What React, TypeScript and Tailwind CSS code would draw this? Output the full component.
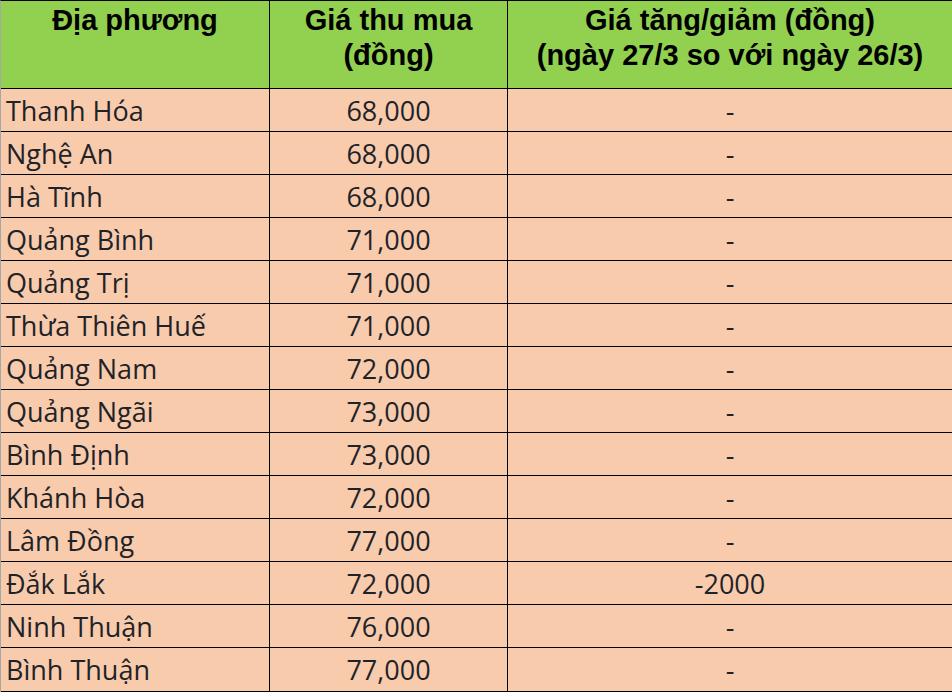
import React from "react";

const rows: [string, string, string][] = [
  ["Thanh Hóa", "68,000", "-"],
  ["Nghệ An", "68,000", "-"],
  ["Hà Tĩnh", "68,000", "-"],
  ["Quảng Bình", "71,000", "-"],
  ["Quảng Trị", "71,000", "-"],
  ["Thừa Thiên Huế", "71,000", "-"],
  ["Quảng Nam", "72,000", "-"],
  ["Quảng Ngãi", "73,000", "-"],
  ["Bình Định", "73,000", "-"],
  ["Khánh Hòa", "72,000", "-"],
  ["Lâm Đồng", "77,000", "-"],
  ["Đắk Lắk", "72,000", "-2000"],
  ["Ninh Thuận", "76,000", "-"],
  ["Bình Thuận", "77,000", "-"],
];

export default function App() {
  return (
    <div className="w-[952px] h-[696px] bg-white overflow-hidden">
      <div className="w-[952px] border-t border-t-black border-l border-l-[#a6a6a6]">
        <div className="grid grid-cols-[269px_238px_1fr] font-['Liberation_Sans',Arial,sans-serif] font-bold text-[29px] leading-[35px] text-black bg-[#92d050]">
          <div className="h-[88px] border-r border-b border-black text-center pt-[2px]">Địa phương</div>
          <div className="h-[88px] border-r border-b border-black text-center pt-[2px]">
            Giá thu mua
            <br />
            (đồng)
          </div>
          <div className="h-[88px] border-b border-black text-center pt-[2px]">
            Giá tăng/giảm (đồng)
            <br />
            (ngày 27/3 so với ngày 26/3)
          </div>
        </div>
        {rows.map(([name, price, change], i) => (
          <div
            key={name}
            className={
              "grid grid-cols-[269px_238px_1fr] bg-[#f8cbad] font-['Open_Sans',sans-serif] text-[27px] text-[#1f2328] " +
              (i === rows.length - 1 ? "h-[44px]" : "h-[43px]")
            }
          >
            <div className="border-r border-b border-black pl-[5px] flex items-center leading-none">{name}</div>
            <div className="border-r border-b border-black flex items-center justify-center leading-none">{price}</div>
            <div className="border-b border-black flex items-center justify-center leading-none">{change}</div>
          </div>
        ))}
      </div>
    </div>
  );
}
